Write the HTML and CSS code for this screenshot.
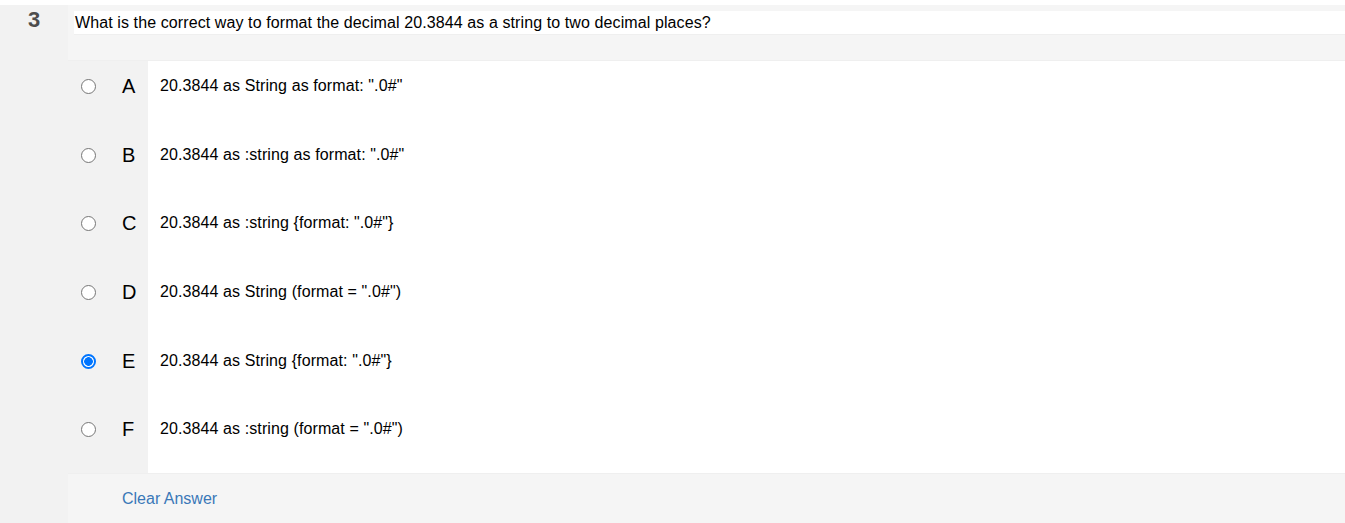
FILE: index.html
```html
<!DOCTYPE html>
<html>
<head>
<meta charset="utf-8">
<link rel="stylesheet" href="styles.css">
</head>
<body>
<div class="page">
  <div class="num">3</div>
  <div class="main">
    <div class="qhead">
      <div class="qtext">What is the correct way to format the decimal 20.3844 as a string to two decimal places?</div>
    </div>
    <div class="options">
      <label class="opt">
        <span class="opt-left"><input type="radio" name="q3" class="radio"><span class="letter">A</span></span>
        <span class="opt-text">20.3844 as String as format: ".0#"</span>
      </label>
      <label class="opt">
        <span class="opt-left"><input type="radio" name="q3" class="radio"><span class="letter">B</span></span>
        <span class="opt-text">20.3844 as :string as format: ".0#"</span>
      </label>
      <label class="opt">
        <span class="opt-left"><input type="radio" name="q3" class="radio"><span class="letter">C</span></span>
        <span class="opt-text">20.3844 as :string {format: ".0#"}</span>
      </label>
      <label class="opt">
        <span class="opt-left"><input type="radio" name="q3" class="radio"><span class="letter">D</span></span>
        <span class="opt-text">20.3844 as String (format = ".0#")</span>
      </label>
      <label class="opt">
        <span class="opt-left"><input type="radio" name="q3" class="radio" checked><span class="letter">E</span></span>
        <span class="opt-text">20.3844 as String {format: ".0#"}</span>
      </label>
      <label class="opt">
        <span class="opt-left"><input type="radio" name="q3" class="radio"><span class="letter">F</span></span>
        <span class="opt-text">20.3844 as :string (format = ".0#")</span>
      </label>
    </div>
    <div class="clear-bar"><span class="clear-link">Clear Answer</span></div>
  </div>
</div>
</body>
</html>
```

FILE: styles.css
```css
html, body {
  margin: 0;
  padding: 0;
  background: #ffffff;
  font-family: "Liberation Sans", Arial, sans-serif;
  color: #000;
}

.page {
  margin-top: 5px;
  display: flex;
  background: #f2f2f2;
  height: 518px;
  overflow: hidden;
}

.num {
  width: 68px;
  flex: none;
  text-align: center;
  font-size: 22px;
  font-weight: bold;
  color: #4d4d4d;
  line-height: 22px;
  padding-top: 4px;
}

.main {
  flex: 1;
  display: flex;
  flex-direction: column;
}

.qhead {
  background: #f5f5f5;
  height: 56px;
  padding: 6px 0 0 6px;
  box-sizing: border-box;
  border-bottom: 1px solid #efefef;
}

.qtext {
  background: #ffffff;
  height: 24px;
  line-height: 23px;
  font-size: 16px;
  letter-spacing: 0.1px;
  padding-left: 1px;
  border-bottom: 1px solid #efefef;
  box-sizing: border-box;
}

.options {
  display: grid;
  grid-template-rows: repeat(6, 1fr);
  height: 412px;
}

.opt {
  display: flex;
}

.opt-left {
  width: 80px;
  flex: none;
  display: flex;
  align-items: flex-start;
  padding-top: 15px;
  box-sizing: border-box;
}

.radio {
  appearance: none;
  -webkit-appearance: none;
  width: 15px;
  height: 15px;
  margin: 3px 0 0 13px;
  flex: none;
  border: 1px solid #767676;
  border-radius: 50%;
  background: #ffffff;
  box-sizing: border-box;
}

.radio:checked {
  border: 2px solid #0075ff;
  background: radial-gradient(circle, #0075ff 0, #0075ff 4px, #ffffff 4.6px);
}

.letter {
  margin-left: 26px;
  font-size: 20px;
  line-height: 20px;
}

.opt-text {
  flex: 1;
  background: #ffffff;
  padding: 15px 0 0 12px;
  font-size: 16px;
  letter-spacing: 0.1px;
  line-height: 20px;
}

.clear-bar {
  background: #f5f5f5;
  height: 50px;
  padding-left: 54px;
  display: flex;
  align-items: center;
  border-top: 1px solid #efefef;
  box-sizing: border-box;
}

.clear-link {
  color: #3a78b8;
  font-size: 16px;
  margin-top: 1px;
}
```
